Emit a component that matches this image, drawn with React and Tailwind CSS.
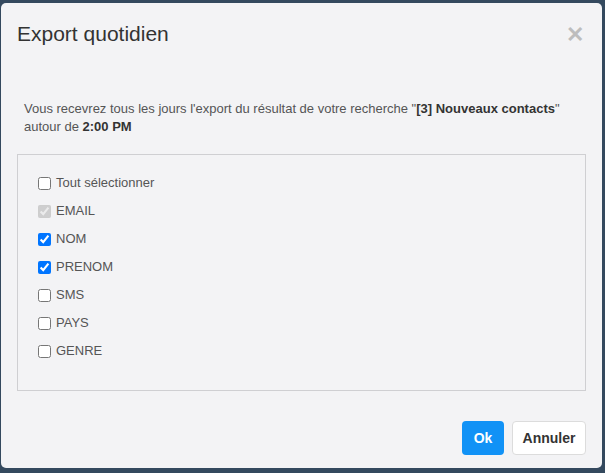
import React from "react";

const items = [
  { label: "Tout sélectionner", checked: false },
  { label: "EMAIL", checked: true, disabled: true },
  { label: "NOM", checked: true },
  { label: "PRENOM", checked: true },
  { label: "SMS", checked: false },
  { label: "PAYS", checked: false },
  { label: "GENRE", checked: false },
];

export default function App() {
  return (
    <div
      className="w-[605px] h-[473px] bg-[#34495e] pt-[3px] pl-[1px] pr-[3px] overflow-hidden"
      style={{ fontFamily: '"Liberation Sans", Arial, sans-serif' }}
    >
      <div className="h-[465px] bg-[#f3f3f5] rounded-[5px] flex flex-col">
        <div className="flex items-start justify-between pl-[16px] pr-[18px] pt-[19px] h-[70px]">
          <h1 className="text-[21px] leading-[24px] text-[#333]">Export quotidien</h1>
          <span className="text-[#bdbdbd] text-[22px] leading-[22px] font-bold mt-[2px]">✕</span>
        </div>
        <div className="px-[16px] pt-[27px]">
          <p className="pl-[7px] text-[13px] leading-[18px] text-[#555]">
            Vous recevrez tous les jours l'export du résultat de votre recherche "
            <b className="text-[#333]">[3] Nouveaux contacts</b>"
            <br />
            autour de <b className="text-[#333]">2:00 PM</b>
          </p>
          <div className="mt-[18px] h-[237px] border border-[#cfcfd2] pl-[16px] pt-[18px]">
            <div className="flex flex-col gap-[8px]">
              {items.map((it) => (
                <label key={it.label} className="flex items-center h-[20px] text-[13px] text-[#555]">
                  <input
                    type="checkbox"
                    defaultChecked={it.checked}
                    disabled={it.disabled}
                    className="w-[13px] h-[13px] m-0 mr-[5px] ml-[4px]"
                  />
                  {it.label}
                </label>
              ))}
            </div>
          </div>
        </div>
        <div className="flex justify-end gap-[8px] pr-[16px] pt-[30px]">
          <button className="h-[34px] w-[42px] rounded-[4px] bg-[#1192f6] text-white text-[14px] font-bold">
            Ok
          </button>
          <button className="h-[34px] w-[74px] rounded-[4px] bg-white border border-[#dcdcdc] text-[#333] text-[14px] font-bold">
            Annuler
          </button>
        </div>
      </div>
    </div>
  );
}
